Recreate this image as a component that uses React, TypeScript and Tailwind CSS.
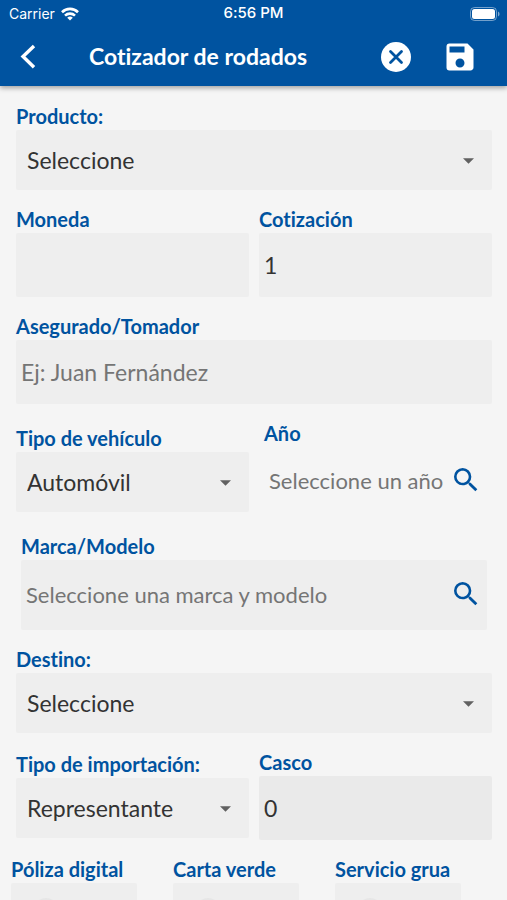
import type { ReactNode } from "react";
import { MdSave, MdSearch } from "react-icons/md";

const labelClass = "block text-xl leading-[27px] font-bold text-[#0053a0]";
const searchInputClass = "w-full min-w-0 text-[22px] text-[#333333] outline-none placeholder:text-[#757575]";

function Label({ id, children }: { id: string; children: ReactNode }) {
  return (
    <label htmlFor={id} className={labelClass}>
      {children}
    </label>
  );
}

function SelectField({ id, label, options }: { id: string; label: string; options: string[] }) {
  return (
    <div>
      <Label id={id}>{label}</Label>
      <div className="relative">
        <select
          id={id}
          className="block h-[60px] w-full appearance-none rounded-xs bg-[#eeeeee] pr-9 pl-[11px] text-[23px] text-[#333333] outline-none"
        >
          {options.map((option) => (
            <option key={option}>{option}</option>
          ))}
        </select>
        <svg viewBox="0 0 10 5" className="pointer-events-none absolute top-7 right-[18px] h-[6px] w-[11px]">
          <path d="M0 0h10L5 5z" fill="#616161" />
        </svg>
      </div>
    </div>
  );
}

type TextFieldProps = {
  id: string;
  label: string;
  value?: string;
  placeholder?: string;
  background?: string;
};

function TextField({ id, label, value, placeholder, background = "bg-[#eeeeee]" }: TextFieldProps) {
  return (
    <div>
      <Label id={id}>{label}</Label>
      <input
        id={id}
        type="text"
        defaultValue={value}
        placeholder={placeholder}
        className={`block h-16 w-full min-w-0 rounded-xs px-[5px] text-[23px] text-[#333333] outline-none placeholder:text-[#757575] ${background}`}
      />
    </div>
  );
}

function SearchButton({ label }: { label: string }) {
  return (
    <button type="button" aria-label={label} className="shrink-0 text-[#0053a0]">
      <MdSearch className="size-8" />
    </button>
  );
}

function SwitchField({ id, label }: { id: string; label: string }) {
  return (
    <div className="pr-9">
      <label htmlFor={id} className={labelClass + " whitespace-nowrap"}>
        {label}
      </label>
      <div className="h-16 rounded-xs bg-[#eeeeee] pt-[15px] pl-[22px]">
        <input id={id} type="checkbox" role="switch" className="block size-[26px] appearance-none rounded-full bg-[#e6e6e6]" />
      </div>
    </div>
  );
}

function StatusBar() {
  return (
    <div className="relative flex h-[27px] items-center justify-between pr-[7px] pl-[9px] font-['Inter','Liberation_Sans',sans-serif] text-[14px]">
      <div className="flex items-center gap-[6px]">
        <span>Carrier</span>
        <svg viewBox="0 0 18 14" className="h-[14px] w-[18px]" fill="none" stroke="currentColor" strokeWidth="2.6">
          <path d="M1 5.2a11.4 11.4 0 0 1 16 0" />
          <path d="M4 8.6a7.2 7.2 0 0 1 10 0" />
          <path d="M9 13.6 6.2 10.8a4 4 0 0 1 5.6 0z" fill="currentColor" stroke="none" />
        </svg>
      </div>
      <span className="absolute inset-x-0 text-center text-[15px] font-medium">6:56 PM</span>
      <svg viewBox="0 0 30 14" className="h-[14px] w-[30px]">
        <rect x="0.5" y="0.5" width="26" height="13" rx="4" fill="none" stroke="#ffffff" strokeOpacity="0.45" />
        <rect x="2" y="2" width="23" height="10" rx="2.5" fill="#ffffff" />
        <path d="M28 4.6v4.8q1.6-.8 1.6-2.4T28 4.6z" fill="#ffffff" fillOpacity="0.5" />
      </svg>
    </div>
  );
}

function Header() {
  return (
    <header className="relative shrink-0 bg-[#0053a0] text-white shadow-[0_2px_5px_rgba(0,0,0,0.35)]">
      <StatusBar />
      <div className="flex h-[59px] items-center pr-[29px] pl-[14px]">
        <button type="button" aria-label="Volver" className="flex size-7 items-center justify-center">
          <svg viewBox="0 0 28 28" className="size-7" fill="none" stroke="currentColor" strokeWidth="3.4">
            <path d="M20 3 9 13.5l11 10.8" />
          </svg>
        </button>
        <h1 className="ml-[47px] flex-1 text-[23px] font-bold whitespace-nowrap">Cotizador de rodados</h1>
        <button type="button" aria-label="Cancelar" className="mr-[31px]">
          <svg viewBox="0 0 30 30" className="size-[30px]">
            <circle cx="15" cy="15" r="15" fill="#ffffff" />
            <path d="m9.5 9.5 11 11M20.500 9.500l-11 11" stroke="#0053a0" strokeWidth="2.8" strokeLinecap="round" />
          </svg>
        </button>
        <button type="button" aria-label="Guardar">
          <MdSave className="size-9" />
        </button>
      </div>
    </header>
  );
}

export default function App() {
  return (
    <div className="flex h-screen flex-col overflow-hidden bg-[#f5f5f5] font-['Lato','Open_Sans',sans-serif] [font-variant-ligatures:none]">
      <Header />
      <main className="flex-1 overflow-y-auto py-[17px] pr-[15px] pl-4 [scrollbar-width:none]">
        <form className="flex flex-col gap-4">
          <SelectField id="producto" label="Producto:" options={["Seleccione"]} />

          <div className="grid grid-cols-2 gap-[10px]">
            <TextField id="moneda" label="Moneda" />
            <TextField id="cotizacion" label="Cotización" value="1" />
          </div>

          <TextField id="asegurado" label="Asegurado/Tomador" placeholder="Ej: Juan Fernández" />

          <div className="grid grid-cols-2 gap-[10px]">
            <div className="pt-[5px]">
              <SelectField id="tipo-vehiculo" label="Tipo de vehículo" options={["Automóvil"]} />
            </div>
            <div className="px-[5px]">
              <Label id="anio">Año</Label>
              <div className="flex h-16 items-center px-[5px] pt-[2px]">
                <input id="anio" type="text" placeholder="Seleccione un año" className={searchInputClass} />
                <SearchButton label="Buscar año" />
              </div>
            </div>
          </div>

          <div className="px-[5px] pt-[5px]">
            <Label id="marca">Marca/Modelo</Label>
            <div className="flex h-[70px] items-center rounded-xs bg-[#eeeeee] px-[5px] pb-[2px]">
              <input id="marca" type="text" placeholder="Seleccione una marca y modelo" className={searchInputClass} />
              <SearchButton label="Buscar marca y modelo" />
            </div>
          </div>

          <SelectField id="destino" label="Destino:" options={["Seleccione"]} />

          <div className="grid grid-cols-2 gap-[10px]">
            <div className="pt-[2px]">
              <SelectField id="importacion" label="Tipo de importación:" options={["Representante"]} />
            </div>
            <TextField id="casco" label="Casco" value="0" background="bg-[#eaeaea]" />
          </div>

          <div className="-mx-[5px] grid grid-cols-3">
            <SwitchField id="poliza" label="Póliza digital" />
            <SwitchField id="carta" label="Carta verde" />
            <SwitchField id="grua" label="Servicio grua" />
          </div>
        </form>
      </main>
    </div>
  );
}
